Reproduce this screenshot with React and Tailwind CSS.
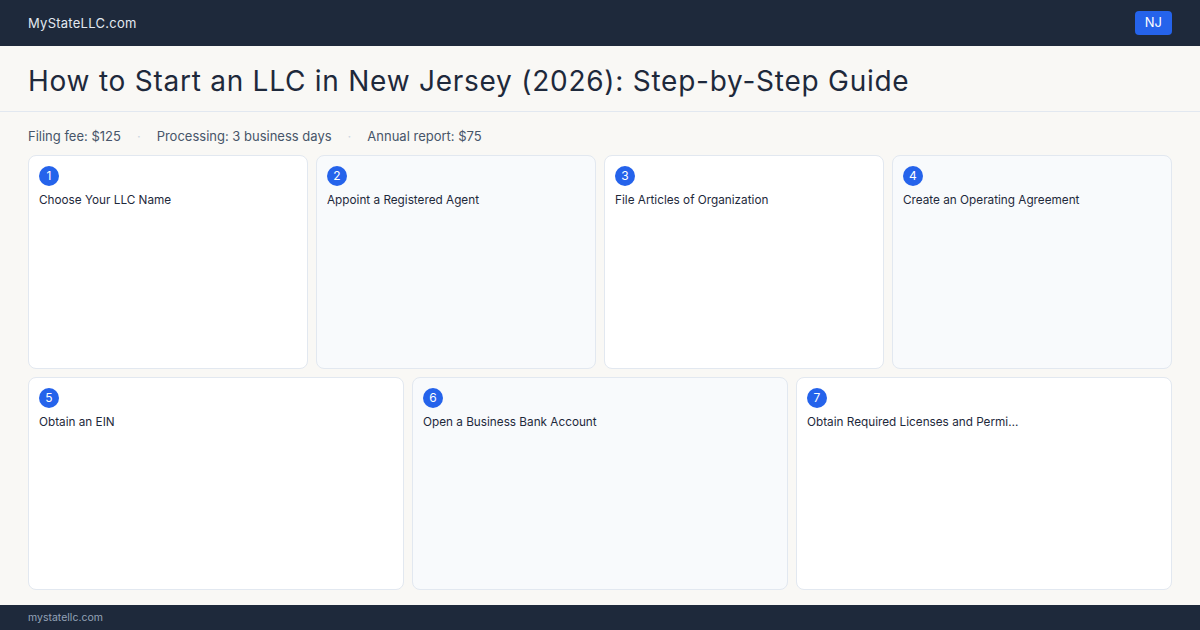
import React from 'react';

const steps = [
  'Choose Your LLC Name',
  'Appoint a Registered Agent',
  'File Articles of Organization',
  'Create an Operating Agreement',
  'Obtain an EIN',
  'Open a Business Bank Account',
  'Obtain Required Licenses and Permits',
];

function StepCard({ n, title, shaded }) {
  return (
    <div className={`min-w-0 rounded-lg border border-[#e2e8f0] p-[10px] ${shaded ? 'bg-[#f8fafc]' : 'bg-white'}`}>
      <div className="flex h-5 w-5 items-center justify-center rounded-full bg-[#2563eb] text-[12px] text-white">
        {n}
      </div>
      <p className="mt-[6px] overflow-hidden whitespace-nowrap text-[11.75px] leading-4 text-[#1e293b]">
        {title.length > 34 ? title.slice(0, 34) + '…' : title}
      </p>
    </div>
  );
}

export default function App() {
  return (
    <div className="flex h-[630px] w-[1200px] flex-col bg-[#f9f8f5] font-['Inter','Liberation_Sans',sans-serif]">
      <header className="flex h-[46px] items-center justify-between bg-[#1e293b] px-7 pt-[2px]">
        <span className="text-[13px] tracking-[0.02em] text-[#e2e8f0]">MyStateLLC.com</span>
        <span className="mb-[2px] flex h-[24px] items-center rounded bg-[#2563eb] px-[10px] text-[13px] text-white">NJ</span>
      </header>

      <div className="flex h-[66px] items-center border-b border-[#e2e8f0] px-7 pt-[4px]">
        <h1 className="text-[28px] tracking-[0.75px] text-[#1e293b]">
          How to Start an LLC in New Jersey (2026): Step-by-Step Guide
        </h1>
      </div>

      <div className="flex items-center gap-4 px-7 pb-[9px] pt-[14px] text-[13px] leading-5 text-[#475569]">
        <span>Filing fee: $125</span>
        <span className="text-[#cbd5e1]">·</span>
        <span>Processing: 3 business days</span>
        <span className="text-[#cbd5e1]">·</span>
        <span>Annual report: $75</span>
      </div>

      <main className="flex flex-1 flex-col gap-2 px-7 pb-[15px]">
        <div className="grid h-[214px] grid-cols-4 gap-2">
          {steps.slice(0, 4).map((s, i) => (
            <StepCard key={s} n={i + 1} title={s} shaded={i % 2 === 1} />
          ))}
        </div>
        <div className="grid flex-1 grid-cols-3 gap-2">
          {steps.slice(4).map((s, i) => (
            <StepCard key={s} n={i + 5} title={s} shaded={i % 2 === 1} />
          ))}
        </div>
      </main>

      <footer className="flex h-[25px] items-center bg-[#1e293b] px-7 pt-[1px] text-[10.5px] text-[#94a3b8]">
        mystatellc.com
      </footer>
    </div>
  );
}
